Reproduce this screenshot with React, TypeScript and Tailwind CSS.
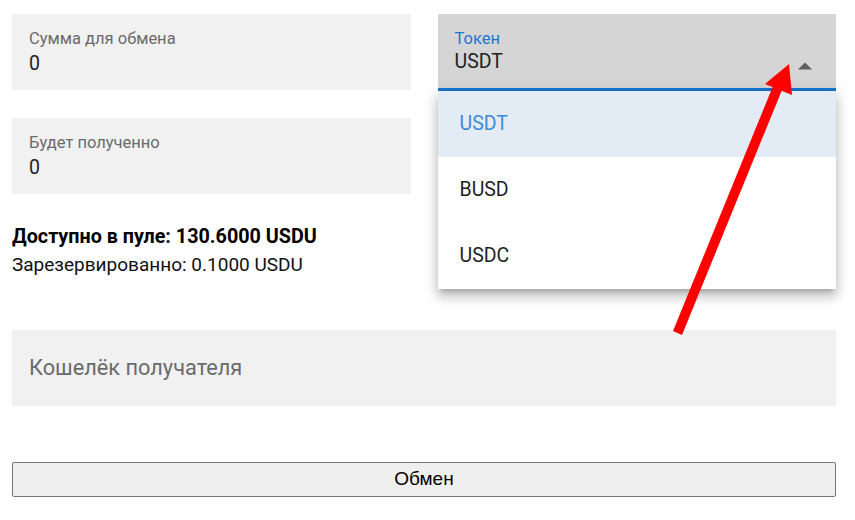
import React from "react";

const tokens = ["USDT", "BUSD", "USDC"];

function Field({ label, value }: { label: string; value: string }) {
  return (
    <div className="flex h-[76px] flex-col bg-[#f1f1f1] pl-[17px] pt-[15px]">
      <span className="text-[16.5px] leading-[20px] text-[#6b6b6b]">{label}</span>
      <span className="mt-[3px] text-[19.5px] leading-[24px] text-[#222]">{value}</span>
    </div>
  );
}

function TokenSelect() {
  return (
    <div className="relative">
      <div className="flex h-[77px] items-start justify-between border-b-[3px] border-[#1976d2] bg-[#d5d5d5] pl-[17px] pr-[24px] pt-[15px]">
        <div className="flex flex-col">
          <span className="text-[16.5px] leading-[20px] text-[#1976d2]">Токен</span>
          <span className="mt-[1px] text-[19.5px] leading-[24px] text-[#222]">USDT</span>
        </div>
        <svg width="14" height="8" viewBox="0 0 14 8" className="mt-[33px]">
          <polygon points="0,7.5 7,0.5 14,7.5" fill="#5f5f5f" />
        </svg>
      </div>
      <ul className="absolute left-0 right-0 top-[77px] z-10 bg-white shadow-[0_5px_5px_-3px_rgba(0,0,0,0.2),0_8px_10px_1px_rgba(0,0,0,0.14),0_3px_14px_2px_rgba(0,0,0,0.12)]">
        {tokens.map((t, i) => (
          <li
            key={t}
            className={
              i === 0
                ? "flex h-[66px] items-center bg-[#e3ebf5] pl-[22px] text-[19.5px] text-[#3d8ad8]"
                : "flex h-[66px] items-center pl-[22px] text-[19.5px] text-[#1f1f1f]"
            }
          >
            {t}
          </li>
        ))}
      </ul>
    </div>
  );
}

export default function App() {
  return (
    <div className="relative h-[520px] w-[855px] bg-white font-['Roboto',sans-serif]">
      <div className="flex w-[836px] flex-col pl-[12px] pt-[14px]">
        <div className="grid grid-cols-2 gap-x-[27px]">
          <div className="flex flex-col gap-[28px]">
            <Field label="Сумма для обмена" value="0" />
            <Field label="Будет полученно" value="0" />
          </div>
          <TokenSelect />
        </div>

        <div className="mt-[31px] flex flex-col">
          <span className="text-[19.75px] font-bold leading-[24px] text-black">
            Доступно в пуле: 130.6000 USDU
          </span>
          <span className="mt-[5px] text-[19px] leading-[22px] text-[#111]">
            Зарезервированно: 0.1000 USDU
          </span>
        </div>

        <div className="mt-[54px] flex h-[76px] items-center bg-[#f1f1f1] pl-[17px]">
          <span className="text-[21.75px] text-[#6b6b6b]">Кошелёк получателя</span>
        </div>

        <button className="mt-[56px] h-[35px] rounded-[2px] border border-[#767676] bg-[#efefef] font-['Liberation_Sans',Arial,sans-serif] text-[19px] text-black">
          Обмен
        </button>
      </div>

      <svg
        className="pointer-events-none absolute left-0 top-0 z-20"
        width="855"
        height="520"
        viewBox="0 0 855 520"
      >
        <polygon points="673,331 682,335 782,90 773,86" fill="#ff0000" />
        <polygon points="789,64 765,84 792,95" fill="#ff0000" />
      </svg>
    </div>
  );
}
